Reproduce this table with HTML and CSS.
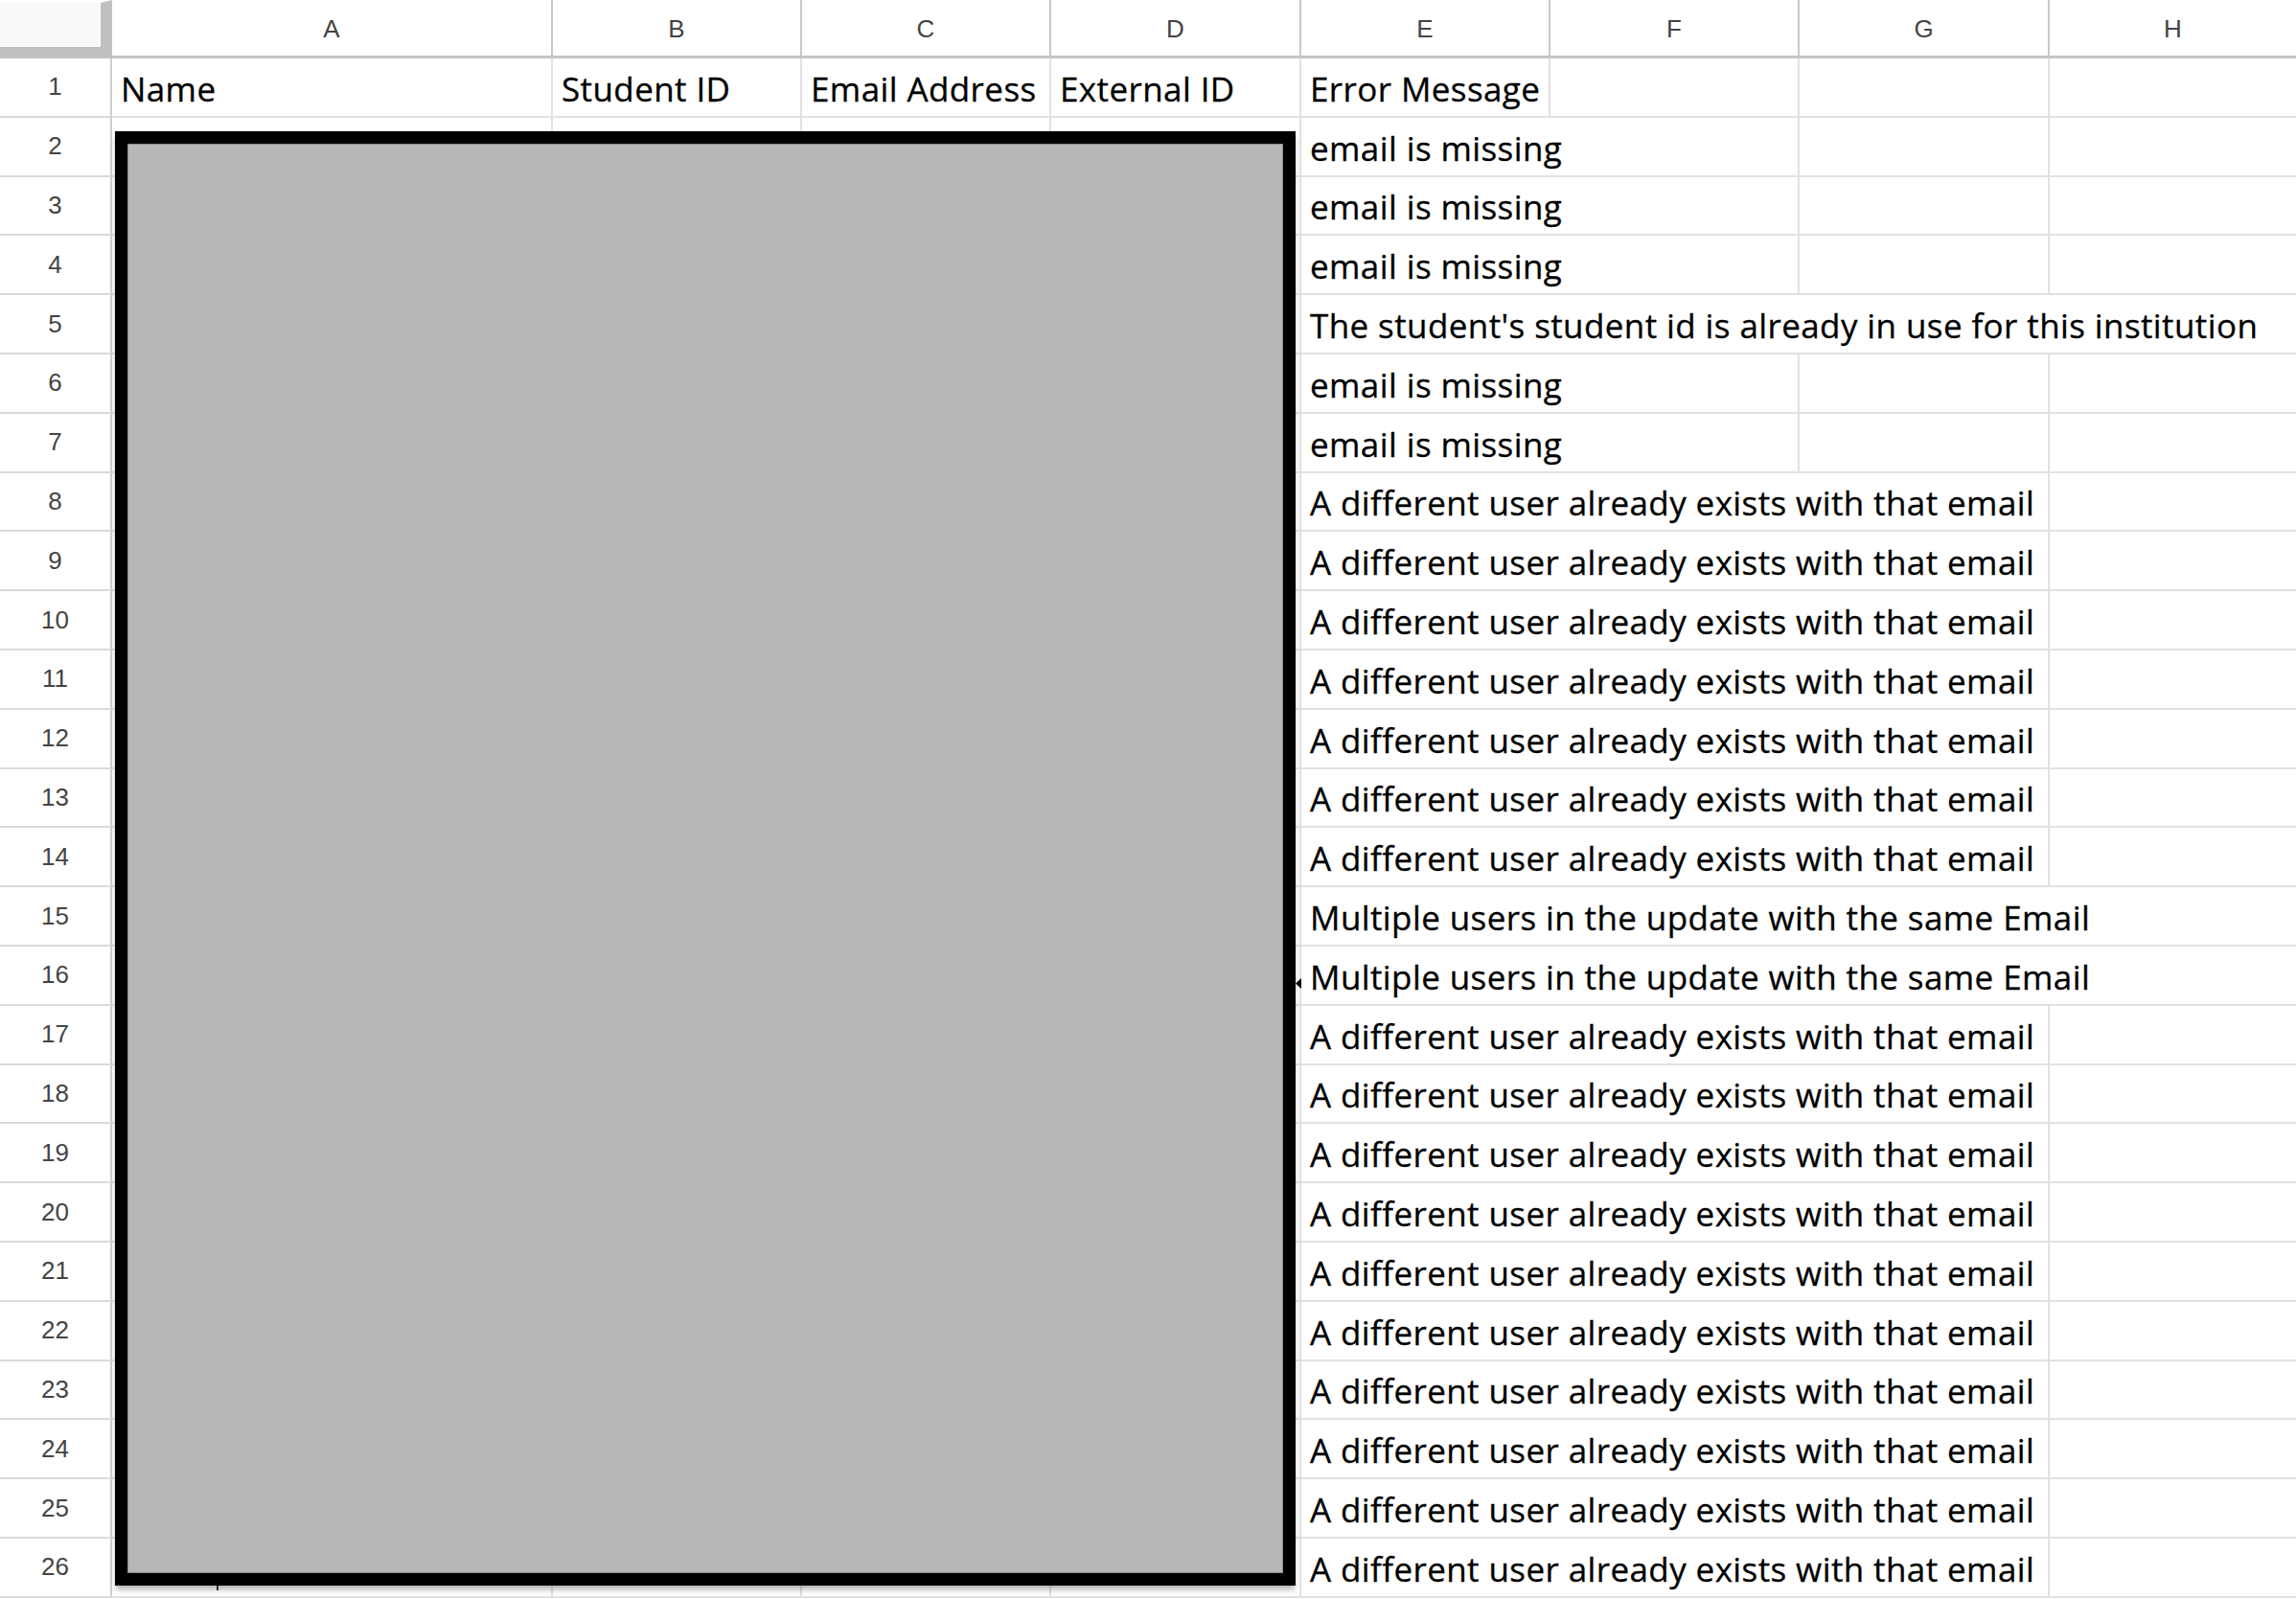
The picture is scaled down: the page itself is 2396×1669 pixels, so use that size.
FILE: index.html
```html
<!DOCTYPE html>
<html lang="en">
<head>
<meta charset="utf-8">
<title>Sheet</title>
<link rel="stylesheet" href="styles.css">
</head>
<body>
<div class="sheet">
  <div class="corner"></div>
  <div class="hd">A</div><div class="hd">B</div><div class="hd">C</div><div class="hd">D</div><div class="hd">E</div><div class="hd">F</div><div class="hd">G</div><div class="hd hd-last">H</div><div class="hd hd-last"></div>

  <div class="rn">1</div><div class="c">Name</div><div class="c">Student ID</div><div class="c">Email Address</div><div class="c">External ID</div><div class="c">Error Message</div><div class="c"></div><div class="c"></div><div class="c last"></div><div class="c last"></div>

  <div class="rn">2</div><div class="c"></div><div class="c"></div><div class="c"></div><div class="c"></div><div class="c ov e2">email is missing</div><div class="c"></div><div class="c last"></div><div class="c last"></div>
  <div class="rn">3</div><div class="c"></div><div class="c"></div><div class="c"></div><div class="c"></div><div class="c ov e2">email is missing</div><div class="c"></div><div class="c last"></div><div class="c last"></div>
  <div class="rn">4</div><div class="c"></div><div class="c"></div><div class="c"></div><div class="c"></div><div class="c ov e2">email is missing</div><div class="c"></div><div class="c last"></div><div class="c last"></div>
  <div class="rn">5</div><div class="c"></div><div class="c"></div><div class="c"></div><div class="c"></div><div class="c ov e5 last">The student's student id is already in use for this institution</div>
  <div class="rn">6</div><div class="c"></div><div class="c"></div><div class="c"></div><div class="c"></div><div class="c ov e2">email is missing</div><div class="c"></div><div class="c last"></div><div class="c last"></div>
  <div class="rn">7</div><div class="c"></div><div class="c"></div><div class="c"></div><div class="c"></div><div class="c ov e2">email is missing</div><div class="c"></div><div class="c last"></div><div class="c last"></div>
  <div class="rn">8</div><div class="c"></div><div class="c"></div><div class="c"></div><div class="c"></div><div class="c ov e3">A different user already exists with that email</div><div class="c last"></div><div class="c last"></div>
  <div class="rn">9</div><div class="c"></div><div class="c"></div><div class="c"></div><div class="c"></div><div class="c ov e3">A different user already exists with that email</div><div class="c last"></div><div class="c last"></div>
  <div class="rn">10</div><div class="c"></div><div class="c"></div><div class="c"></div><div class="c"></div><div class="c ov e3">A different user already exists with that email</div><div class="c last"></div><div class="c last"></div>
  <div class="rn">11</div><div class="c"></div><div class="c"></div><div class="c"></div><div class="c"></div><div class="c ov e3">A different user already exists with that email</div><div class="c last"></div><div class="c last"></div>
  <div class="rn">12</div><div class="c"></div><div class="c"></div><div class="c"></div><div class="c"></div><div class="c ov e3">A different user already exists with that email</div><div class="c last"></div><div class="c last"></div>
  <div class="rn">13</div><div class="c"></div><div class="c"></div><div class="c"></div><div class="c"></div><div class="c ov e3">A different user already exists with that email</div><div class="c last"></div><div class="c last"></div>
  <div class="rn">14</div><div class="c"></div><div class="c"></div><div class="c"></div><div class="c"></div><div class="c ov e3">A different user already exists with that email</div><div class="c last"></div><div class="c last"></div>
  <div class="rn">15</div><div class="c"></div><div class="c"></div><div class="c"></div><div class="c"></div><div class="c ov e5 last">Multiple users in the update with the same Email</div>
  <div class="rn">16</div><div class="c"></div><div class="c"></div><div class="c"></div><div class="c"></div><div class="c ov e5 last">Multiple users in the update with the same Email</div>
  <div class="rn">17</div><div class="c"></div><div class="c"></div><div class="c"></div><div class="c"></div><div class="c ov e3">A different user already exists with that email</div><div class="c last"></div><div class="c last"></div>
  <div class="rn">18</div><div class="c"></div><div class="c"></div><div class="c"></div><div class="c"></div><div class="c ov e3">A different user already exists with that email</div><div class="c last"></div><div class="c last"></div>
  <div class="rn">19</div><div class="c"></div><div class="c"></div><div class="c"></div><div class="c"></div><div class="c ov e3">A different user already exists with that email</div><div class="c last"></div><div class="c last"></div>
  <div class="rn">20</div><div class="c"></div><div class="c"></div><div class="c"></div><div class="c"></div><div class="c ov e3">A different user already exists with that email</div><div class="c last"></div><div class="c last"></div>
  <div class="rn">21</div><div class="c"></div><div class="c"></div><div class="c"></div><div class="c"></div><div class="c ov e3">A different user already exists with that email</div><div class="c last"></div><div class="c last"></div>
  <div class="rn">22</div><div class="c"></div><div class="c"></div><div class="c"></div><div class="c"></div><div class="c ov e3">A different user already exists with that email</div><div class="c last"></div><div class="c last"></div>
  <div class="rn">23</div><div class="c"></div><div class="c"></div><div class="c"></div><div class="c"></div><div class="c ov e3">A different user already exists with that email</div><div class="c last"></div><div class="c last"></div>
  <div class="rn">24</div><div class="c"></div><div class="c"></div><div class="c"></div><div class="c"></div><div class="c ov e3">A different user already exists with that email</div><div class="c last"></div><div class="c last"></div>
  <div class="rn">25</div><div class="c"></div><div class="c"></div><div class="c"></div><div class="c"></div><div class="c ov e3">A different user already exists with that email</div><div class="c last"></div><div class="c last"></div>
  <div class="rn">26</div><div class="c"></div><div class="c"></div><div class="c"></div><div class="c"></div><div class="c ov e3">A different user already exists with that email</div><div class="c last"></div><div class="c last"></div>

  <div class="redact"></div>
  <div class="nub"></div>
  <div class="tick"></div>
</div>
</body>
</html>
```

FILE: styles.css
```css
html, body {
  margin: 0;
  padding: 0;
  background: #ffffff;
  overflow: hidden;
}

.sheet {
  position: relative;
  display: grid;
  grid-template-columns: 117px 460px 260px 260px 261px 260px 260px 261px 257px 200px;
  grid-template-rows: 61px repeat(26, 61.8px);
  width: max-content;
}

.corner {
  box-sizing: border-box;
  background: #f8f9fa;
  border-top: 3px solid #ffffff;
  border-right: 12px solid #c0c0c0;
  border-bottom: 12px solid #c0c0c0;
}

.hd {
  box-sizing: border-box;
  display: flex;
  align-items: center;
  justify-content: center;
  padding-top: 2px;
  font-family: "Liberation Sans", Arial, sans-serif;
  font-size: 26px;
  color: #444444;
  background: #ffffff;
  border-right: 2px solid #c9c9c9;
  border-bottom: 3px solid #c4c4c4;
}

.hd-last {
  border-right: none;
}

.rn {
  box-sizing: border-box;
  display: flex;
  align-items: center;
  justify-content: center;
  font-family: "Liberation Sans", Arial, sans-serif;
  font-size: 26px;
  color: #444444;
  background: #ffffff;
  border-right: 2px solid #cfcfcf;
  border-bottom: 2px solid #dadada;
}

.c {
  box-sizing: border-box;
  min-width: 0;
  display: flex;
  align-items: flex-end;
  padding: 0 0 11px 9px;
  font-family: "Open Sans", Lato, sans-serif;
  font-size: 35px;
  line-height: 34px;
  letter-spacing: 0.4px;
  color: #000000;
  -webkit-text-stroke: 0.3px #000000;
  white-space: nowrap;
  overflow: hidden;
  border-right: 2px solid #e1e1e1;
  border-bottom: 2px solid #e1e1e1;
}

.ov {
  overflow: visible;
}

.e2 { grid-column: span 2; }
.e3 { grid-column: span 3; }
.e5 { grid-column: span 5; }

.last {
  border-right: none;
}

.redact {
  position: absolute;
  left: 120px;
  top: 137px;
  width: 1232px;
  height: 1518px;
  box-sizing: border-box;
  border: 13px solid #000000;
  background: #b7b7b7;
  box-shadow: inset 0 0 0 1px #8c8c8c, 0 5px 6px -1px rgba(0, 0, 0, 0.3);
}

.nub {
  position: absolute;
  left: 1352px;
  top: 1021px;
  width: 6px;
  height: 11px;
  background: #000000;
  clip-path: polygon(0 50%, 100% 0, 100% 100%);
}

.tick {
  position: absolute;
  left: 226px;
  top: 1655px;
  width: 2px;
  height: 5px;
  background: #333333;
}
```
